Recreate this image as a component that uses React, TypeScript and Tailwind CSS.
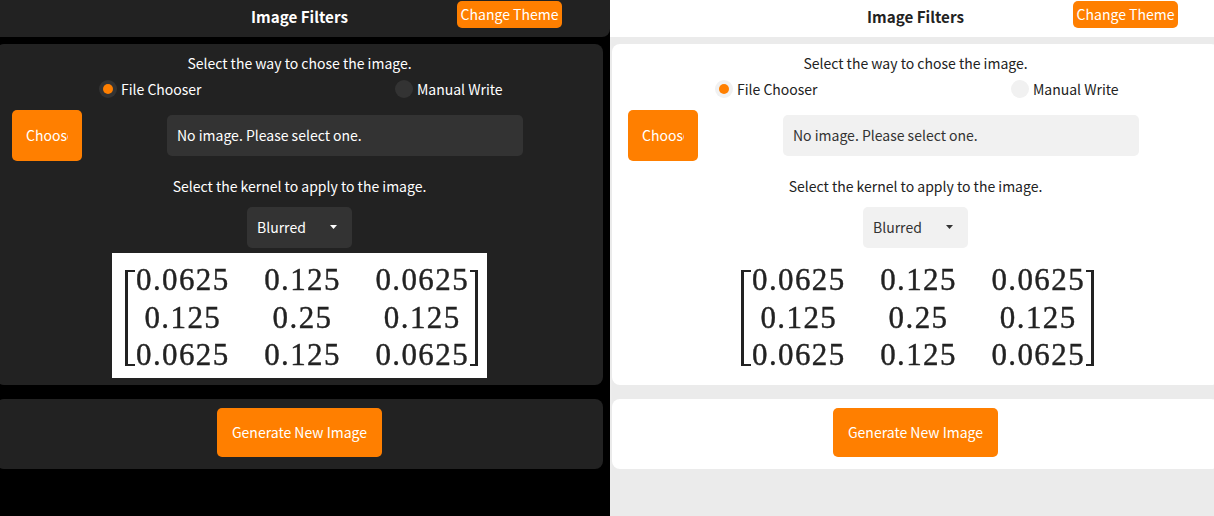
const matrix = [
  ['0.0625', '0.125', '0.0625'],
  ['0.125', '0.25', '0.125'],
  ['0.0625', '0.125', '0.0625'],
]

function KernelImage() {
  return (
    <div className="mx-auto mt-[5px] flex h-[125px] w-[375px] items-center bg-white pl-[13px] text-[#222]">
      <div className="mt-1 h-[96px] w-[10px] border-y-2 border-l-[3px] border-[#222]" />
      <div className="mt-1 ml-px grid grid-cols-[auto_auto_auto] gap-x-[34.5px] font-['Liberation_Serif',serif] text-[31px] leading-[37.5px] tracking-[1.4px] blur-[0.4px] [-webkit-text-stroke:0.4px_#222]">
        {matrix.flat().map((value, i) => (
          <span key={i} className="text-center">
            {value}
          </span>
        ))}
      </div>
      <div className="mt-1 ml-px h-[96px] w-[8px] border-y-2 border-r-[3px] border-[#222]" />
    </div>
  )
}

function OrangeButton({ children, className }: { children: React.ReactNode; className: string }) {
  return <button className={`bg-[#ff7f00] text-white ${className}`}>{children}</button>
}

function Panel({ dark }: { dark: boolean }) {
  const card = dark ? 'bg-[#222] text-white' : 'bg-white text-[#222]'
  const field = dark ? 'bg-[#333] text-white' : 'bg-[#f1f1f1] text-[#333]'
  const radio = dark ? 'bg-[#333]' : 'bg-[#f1f1f1]'

  return (
    <div
      className={
        dark
          ? 'h-[516px] w-[610px] shrink-0 overflow-hidden bg-black'
          : 'h-[516px] w-[604px] shrink-0 overflow-hidden bg-[#ebebeb]'
      }
    >
      <header
        className={
          dark
            ? 'flex h-[37px] items-start rounded-br-lg bg-[#222] pl-[251px] text-white'
            : 'flex h-[37px] items-start bg-white pl-[257px] text-[#222]'
        }
      >
        <h1 className="w-[206px] pt-1 text-[15.2px] leading-6 font-bold">Image Filters</h1>
        <OrangeButton className="mt-px h-[27px] w-[105px] rounded-[5px] text-sm leading-[27px] whitespace-nowrap">
          Change Theme
        </OrangeButton>
      </header>

      <div className={dark ? '-ml-1 w-[607px]' : 'ml-[2px] w-[607px]'}>
        <section className={`mt-[7px] h-[341px] rounded-lg pt-[7px] text-sm ${card}`}>
          <p className="text-center leading-6">Select the way to chose the image.</p>
          <div className="mx-auto mt-0.5 grid w-[597px] grid-cols-2 justify-items-center">
            <label className="flex h-6 items-center gap-1">
              <span className={`flex size-[18px] items-center justify-center rounded-full ${radio}`}>
                <span className="size-[10px] rounded-full bg-[#ff7f00]" />
              </span>
              File Chooser
            </label>
            <label className="flex h-6 items-center gap-1">
              <span className={`size-[18px] rounded-full ${radio}`} />
              Manual Write
            </label>
          </div>

          <div className="mt-[9px] flex items-center pl-4">
            <OrangeButton className="h-[51px] w-[70px] rounded-[5px] px-[14px] pb-0.5">
              <span className="block w-[42px] overflow-hidden text-left whitespace-nowrap">Choose</span>
            </OrangeButton>
            <div className={`ml-[85px] flex h-[41px] w-[356px] items-center rounded-[5px] px-[10px] pb-0.5 ${field}`}>
              No image. Please select one.
            </div>
          </div>

          <p className="mt-[13px] text-center leading-6">Select the kernel to apply to the image.</p>
          <div className={`mx-auto mt-[9px] flex h-[41px] w-[105px] items-center justify-between rounded-[5px] pr-[15px] pb-0.5 pl-[10px] ${field}`}>
            Blurred
            <svg width="7" height="4" viewBox="0 0 7 4" className="fill-current">
              <path d="M0 0h7L3.5 4z" />
            </svg>
          </div>
          <KernelImage />
        </section>

        <section className={`mt-[14px] flex h-[70px] justify-center rounded-lg pt-[9px] ${card}`}>
          <OrangeButton className="h-[49px] w-[165px] rounded-[5px] pb-0.5 text-sm">Generate New Image</OrangeButton>
        </section>
      </div>
    </div>
  )
}

export default function App() {
  return (
    <div className="flex h-[516px] w-[1214px] overflow-hidden font-['Noto_Sans_CJK_SC','Noto_Sans',sans-serif] text-base">
      <Panel dark />
      <Panel dark={false} />
    </div>
  )
}
